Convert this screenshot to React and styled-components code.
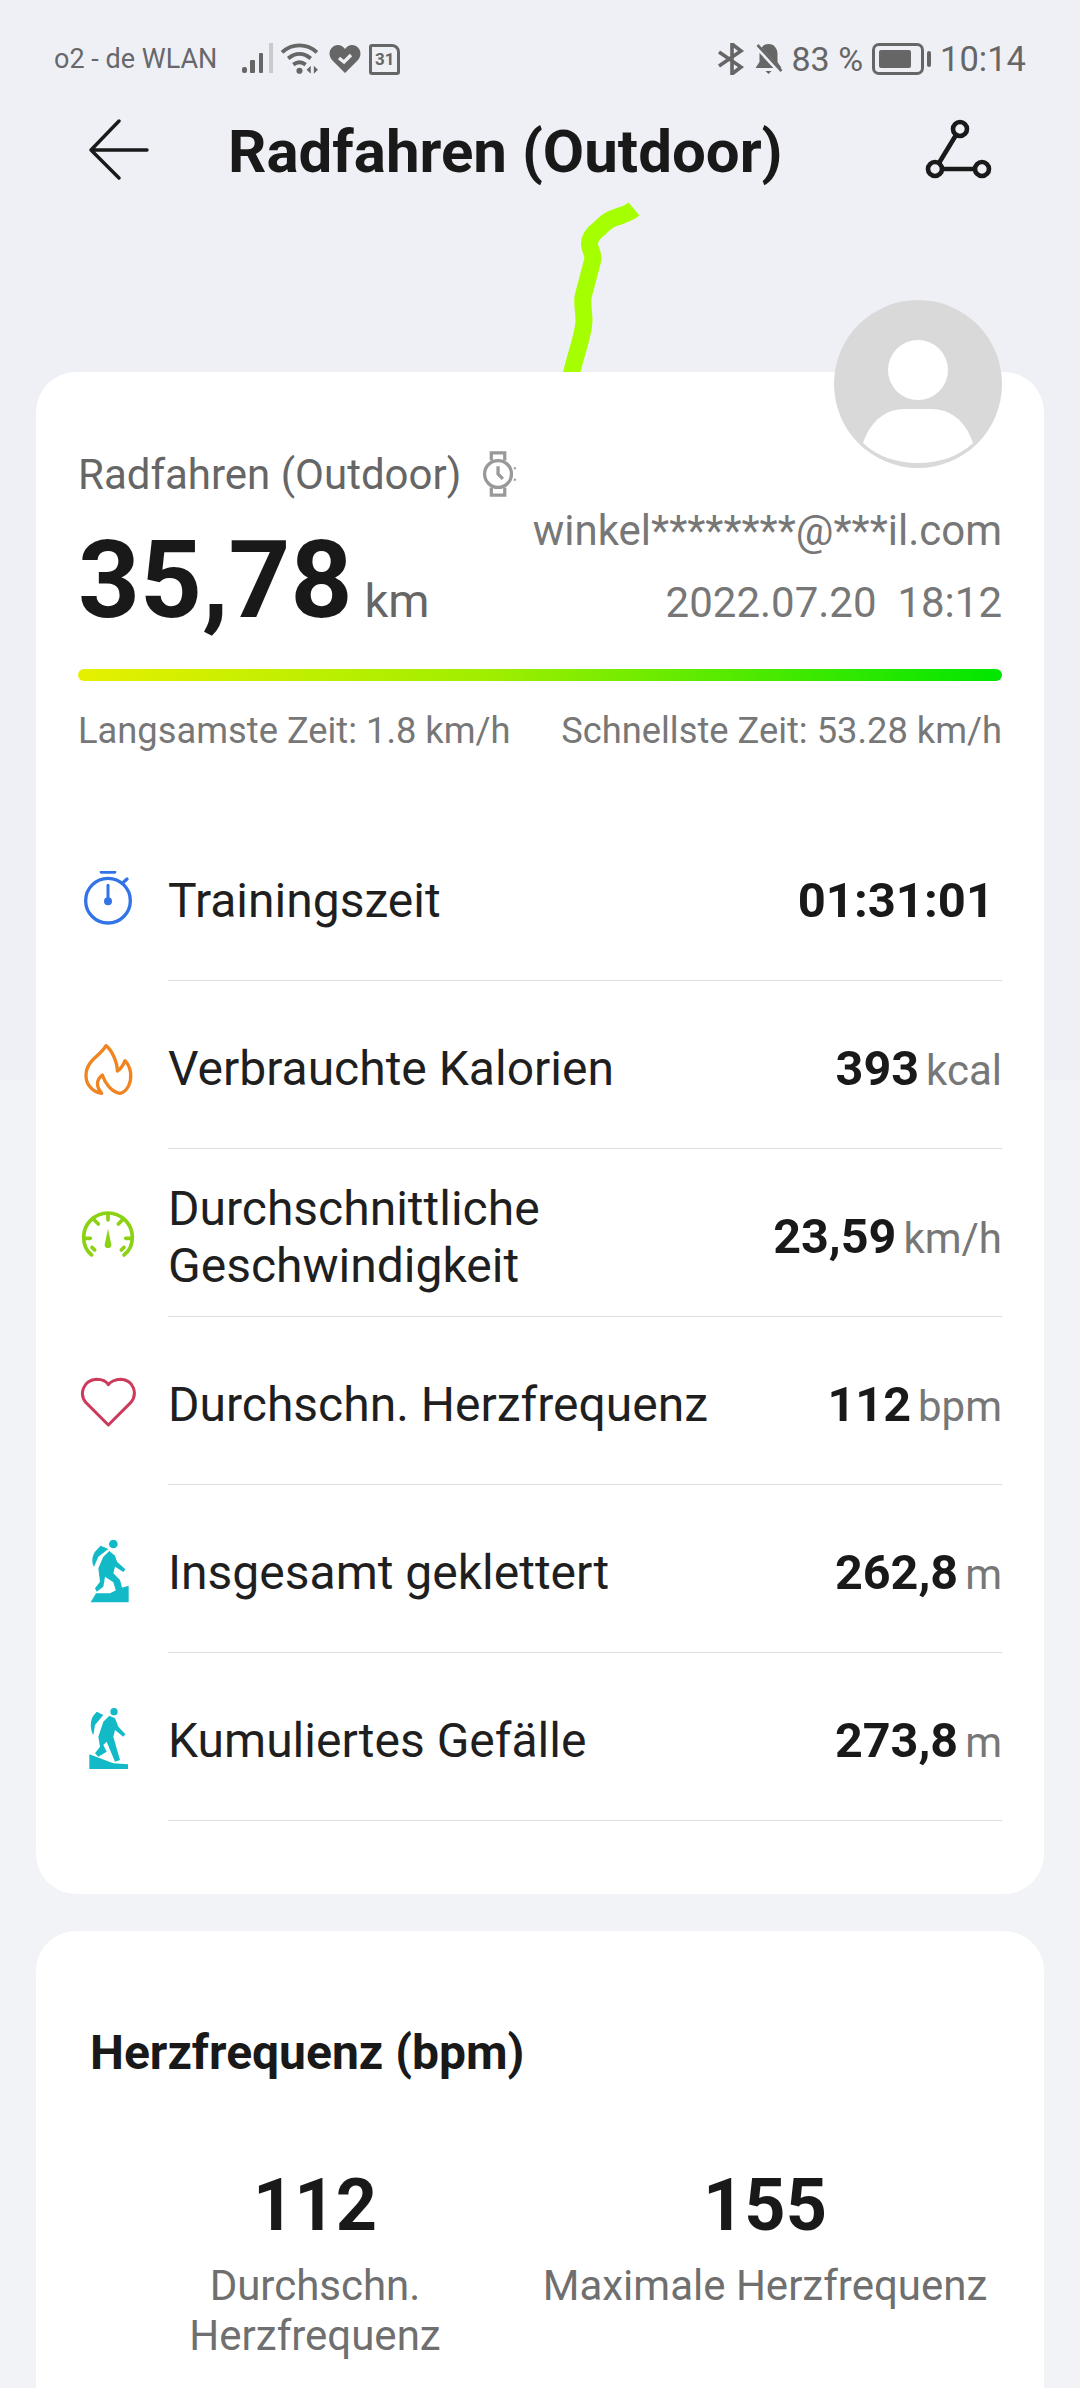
import React from "react";
import styled, { createGlobalStyle } from "styled-components";

const GlobalStyle = createGlobalStyle`
  html, body {
    margin: 0;
    padding: 0;
    background: #f2f3f7;
  }
  * {
    box-sizing: border-box;
  }
`;

const rows = [
  { icon: "timer", label: "Trainingszeit", value: "01:31:01", big: true },
  { icon: "flame", label: "Verbrauchte Kalorien", value: "393", unit: "kcal" },
  { icon: "gauge", label: "Durchschnittliche Geschwindigkeit", value: "23,59", unit: "km/h" },
  { icon: "heart", label: "Durchschn. Herzfrequenz", value: "112", unit: "bpm" },
  { icon: "climb", label: "Insgesamt geklettert", value: "262,8", unit: "m" },
  { icon: "descent", label: "Kumuliertes Gefälle", value: "273,8", unit: "m" },
];

const RowIcon = ({ name }) => {
  if (name === "timer") {
    return (
      <svg width="60" height="60" viewBox="54 63 180 180" fill="none" stroke="#3274e6" strokeWidth="10" strokeLinecap="round">
        <path d="M124 66h40" />
        <circle cx="144" cy="152" r="67" />
        <path d="M144 106v46" strokeWidth="9" />
        <circle cx="144" cy="154" r="7" fill="#3274e6" />
        <path d="M191 96l10-9" />
      </svg>
    );
  }
  if (name === "flame") {
    return (
      <svg width="60" height="60" viewBox="54 102 180 180" fill="none" stroke="#f08421" strokeWidth="10" strokeLinejoin="round">
        <path d="M138 122C120 155 78 165 78 212C78 240 100 262 125 265C108 245 108 225 127 210C135 235 155 262 180 265C205 258 214 230 212 205C210 190 203 175 195 167C190 180 182 192 172 198C172 170 155 135 138 122Z" />
      </svg>
    );
  }
  if (name === "gauge") {
    return (
      <svg width="60" height="60" viewBox="54 81 180 180" fill="none" stroke="#8ad212" strokeWidth="11" strokeLinecap="round" strokeLinejoin="round">
        <path d="M95 225C78 212 71 190 71 172A73 73 0 0 1 217 172C217 190 210 212 192 225" />
        <path d="M144 102v18M73 175h18M197 175h18M103 120l12 12M187 120l-12 12M104 210l-8-8M184 210l8-8" />
        <path d="M144 146l10 48a10 10 0 0 1-20 0z" fill="#8ad212" stroke="none" />
      </svg>
    );
  }
  if (name === "heart") {
    return (
      <svg width="60" height="60" viewBox="54 585 180 180" fill="none" stroke="#cc3a5c" strokeWidth="9" strokeLinejoin="round">
        <path d="M145 735L78 668C56 642 70 600 110 598C128 598 140 606 145 614C150 606 165 598 182 598C222 600 234 642 212 668Z" />
      </svg>
    );
  }
  if (name === "climb") {
    return (
      <svg width="60" height="60" viewBox="24 54 180 180" fill="#12b9c7" overflow="visible">
        <circle cx="130" cy="57" r="13" />
        <path d="M92 62L115 72L85 95L72 125C65 115 65 95 75 80Z" />
        <path d="M118 78L135 92L141 110L166 133L160 141L135 125L130 145L150 165L158 195L140 205L130 172L105 155L100 185L80 200L75 190L90 170L85 130L100 95Z" />
        <path d="M62 232L78 205L120 205L150 190L176 182L176 232Z" />
      </svg>
    );
  }
  return (
    <svg width="60" height="60" viewBox="24 48 180 180" fill="#12b9c7" overflow="visible">
      <circle cx="132" cy="50" r="11" />
      <path d="M80 50L100 60L75 90L70 120C60 105 60 75 70 62Z" />
      <path d="M118 62L135 70L145 95L166 118L160 125L135 105L130 125L150 195L135 200L110 140L100 150L110 170L85 185L75 175L90 155L85 125L100 80Z" />
      <path d="M58 178L130 205L174 208L174 222L58 222Z" />
    </svg>
  );
};

const App = () => {
  return (
    <Screen>
      <GlobalStyle />
      <StatusBar>
        <StatusGroup>
          <Carrier>o2 - de WLAN</Carrier>
          <StatusIcons>
            <svg width="34" height="32" viewBox="0 0 34 32" fill="#666">
              <rect x="1" y="24" width="5" height="6" rx="2" />
              <rect x="9" y="17" width="5" height="13" rx="1" />
              <rect x="18" y="10" width="4" height="20" rx="1" />
              <rect x="28" y="0" width="4" height="30" fill="#c9cace" />
            </svg>
            <WifiIcon width="41" height="33" viewBox="0 0 40 32" fill="none" stroke="#666" strokeWidth="3.8">
              <path d="M2 9c10-9 24-9 34 0M8 15c7-6 15-6 22 0M13 21c4-3 8-3 12 0" />
              <circle cx="19" cy="27" r="3" fill="#666" stroke="none" />
              <path d="M30 22v8l-4-4zM33 22v8l4-4z" fill="#666" stroke="none" />
            </WifiIcon>
            <svg width="32" height="30" viewBox="0 0 32 30">
              <path d="M16 29L3 16C-1 11 0 5 5 2c4-2 8-1 11 3 3-4 7-5 11-3 5 3 6 9 2 14z" fill="#666" />
              <path d="M10 14l5 4 7-7" fill="none" stroke="#eff0f5" strokeWidth="3.4" />
            </svg>
            <CalendarBox>31</CalendarBox>
          </StatusIcons>
        </StatusGroup>
        <StatusGroup $wide>
          <svg width="27" height="32" viewBox="0 0 27 32" fill="none" stroke="#666" strokeWidth="3.6">
            <path d="M1 9l22 15-9 7V1l9 7L1 23" />
          </svg>
          <svg width="29" height="32" viewBox="0 0 28 32">
            <path d="M14 1c6 0 9 5 9 10v8l4 6H1l4-6v-8c0-5 3-10 9-10z" fill="#666" />
            <path d="M11 28h6l-3 3z" fill="#666" />
            <path d="M2 3l24 26" stroke="#eff0f5" strokeWidth="5" />
            <path d="M3 2l24 26" stroke="#666" strokeWidth="2.6" />
          </svg>
          <BatteryText>83 %</BatteryText>
          <Battery>
            <BatteryFill />
          </Battery>
          <BatteryCap />
          <Clock>10:14</Clock>
        </StatusGroup>
      </StatusBar>

      <Header>
        <IconButton>
          <svg width="60" height="62" viewBox="0 0 60 62" fill="none" stroke="#1a1a1a" strokeWidth="3.4" strokeLinecap="round" strokeLinejoin="round">
            <path d="M30 2L2 31l28 28M2 31h56" />
          </svg>
        </IconButton>
        <Title>Radfahren (Outdoor)</Title>
        <IconButton>
          <svg width="68" height="62" viewBox="0 0 66 62" fill="none" stroke="#1a1a1a" strokeWidth="4.6">
            <circle cx="34" cy="10" r="7" />
            <circle cx="9" cy="50" r="7" />
            <circle cx="56" cy="50" r="7" />
            <path d="M30 16L13 44M16 50h33" />
          </svg>
        </IconButton>
      </Header>

      <MapArea>
        <svg width="90" height="187" viewBox="560 185 90 187" fill="none" stroke="#a6ff00" strokeWidth="17" strokeLinejoin="round">
          <path d="M634 209C628 214 622 215 617 217C608 219 604 224 600 228C592 234 588 240 590 247C591 251 593 254 593 259L583 297C582 305 584 312 584 320C584 335 575 355 570 380" />
        </svg>
      </MapArea>

      <Card>
        <Avatar>
          <svg width="168" height="168" viewBox="0 0 168 168">
            <circle cx="84" cy="84" r="84" fill="#d9d9d9" />
            <circle cx="84" cy="70" r="30" fill="#fff" />
            <path d="M29 143c8-23 23-34 42-34h26c19 0 34 11 42 34-15 14-34 20-55 20s-40-6-55-20z" fill="#fff" />
          </svg>
        </Avatar>
        <SummaryTop>
          <div>
            <SportLine>
              Radfahren (Outdoor)
              <svg width="36" height="48" viewBox="0 0 36 50" fill="none" stroke="#999" strokeWidth="3.4">
                <circle cx="17" cy="25" r="14" />
                <path d="M10 11V3h14v8M10 39v8h14v-8M17 17v8l5 5" />
                <path d="M34 18l1 2M34 32l1-2" strokeWidth="2" />
              </svg>
            </SportLine>
            <Distance>
              <strong>35,78</strong>
              <span>km</span>
            </Distance>
          </div>
          <Owner>
            <OwnerLine>winkel********@***il.com</OwnerLine>
            <OwnerLine>2022.07.20&nbsp;&nbsp;18:12</OwnerLine>
          </Owner>
        </SummaryTop>
        <SpeedBar />
        <SpeedRange>
          <span>Langsamste Zeit: 1.8 km/h</span>
          <span>Schnellste Zeit: 53.28 km/h</span>
        </SpeedRange>

        <Stats>
          {rows.map((row) => (
            <StatRow key={row.label}>
              <IconCell>
                <RowIcon name={row.icon} />
              </IconCell>
              <StatBody>
                <StatLabel>{row.label}</StatLabel>
                <StatValue>
                  <ValueNumber $big={row.big}>{row.value}</ValueNumber>
                  {row.unit && <ValueUnit>{row.unit}</ValueUnit>}
                </StatValue>
              </StatBody>
            </StatRow>
          ))}
        </Stats>
      </Card>

      <HeartCard>
        <HeartTitle>Herzfrequenz (bpm)</HeartTitle>
        <HeartGrid>
          <HeartCell>
            <HeartNumber>112</HeartNumber>
            <HeartCaption $narrow>Durchschn. Herzfrequenz</HeartCaption>
          </HeartCell>
          <HeartCell>
            <HeartNumber>155</HeartNumber>
            <HeartCaption>Maximale Herzfrequenz</HeartCaption>
          </HeartCell>
        </HeartGrid>
      </HeartCard>
    </Screen>
  );
};

export default App;

const Screen = styled.div`
  width: 1080px;
  height: 2388px;
  overflow: hidden;
  background: linear-gradient(#eff0f5 1080px, #f2f3f7 1080px);
  font-family: Roboto, "Noto Sans", sans-serif;
  color: #191919;
`;

const StatusBar = styled.div`
  height: 115px;
  padding: 41px 54px 0 54px;
  display: flex;
  justify-content: space-between;
  align-items: flex-start;
`;

const StatusGroup = styled.div`
  display: flex;
  align-items: center;
  gap: ${(p) => (p.$wide ? "9px" : "8px")};
  height: 36px;
  color: #666;
`;

const Carrier = styled.span`
  font-size: 27px;
  margin-right: 16px;
  color: #66686c;
`;

const StatusIcons = styled.div`
  display: flex;
  align-items: center;
  gap: 8px;
`;

const WifiIcon = styled.svg`
  margin-left: -3px;
`;

const CalendarBox = styled.div`
  width: 31px;
  height: 31px;
  border: 3px solid #666;
  border-radius: 3px 8px 3px 3px;
  font-size: 17px;
  font-weight: 700;
  line-height: 25px;
  text-align: center;
  color: #666;
`;

const BatteryText = styled.span`
  font-size: 34px;
`;

const Battery = styled.div`
  width: 52px;
  height: 32px;
  padding: 4px;
  border: 3px solid #666;
  border-radius: 7px;
`;

const BatteryFill = styled.div`
  width: 83%;
  height: 100%;
  background: #666;
  border-radius: 2px;
`;

const BatteryCap = styled.div`
  width: 4px;
  height: 16px;
  margin-left: -6px;
  background: #666;
  border-radius: 2px;
`;

const Clock = styled.span`
  font-size: 34.5px;
`;

const Header = styled.div`
  display: flex;
  align-items: center;
  justify-content: space-between;
  height: 70px;
  padding: 0 87px 0 89px;
`;

const IconButton = styled.div`
  display: flex;
  align-items: center;
  justify-content: center;
`;

const Title = styled.h1`
  margin: 0;
  flex: 1;
  padding: 3px 0 0 79px;
  font-size: 60px;
  font-weight: 700;
  color: #191919;
  white-space: nowrap;
`;

const MapArea = styled.div`
  height: 187px;
  padding-left: 560px;
  display: flex;
  overflow: hidden;
`;

const Card = styled.section`
  position: relative;
  margin: 0 36px;
  padding: 0 42px 72px;
  height: 1522px;
  background: #fff;
  border-radius: 40px;
`;

const Avatar = styled.div`
  position: absolute;
  top: -72px;
  right: 42px;
  width: 168px;
  height: 168px;
`;

const SummaryTop = styled.div`
  display: flex;
  justify-content: space-between;
  padding-top: 74px;
`;

const SportLine = styled.div`
  display: flex;
  align-items: center;
  gap: 20px;
  height: 56px;
  font-size: 42px;
  color: #666;
  white-space: nowrap;
`;

const Distance = styled.div`
  display: flex;
  align-items: baseline;
  gap: 12px;
  margin-top: 25px;

  strong {
    font-size: 108px;
    line-height: 106px;
    font-weight: 700;
  }

  span {
    font-size: 47px;
    color: #666;
  }
`;

const Owner = styled.div`
  text-align: right;
  padding-top: 49px;
`;

const OwnerLine = styled.div`
  font-size: 42px;
  line-height: 72px;
  color: #777;
  white-space: nowrap;
`;

const SpeedBar = styled.div`
  height: 12px;
  margin-top: 30px;
  border-radius: 6px;
  background: linear-gradient(90deg, #e6f000, #9fee00 45%, #00e600);
`;

const SpeedRange = styled.div`
  display: flex;
  justify-content: space-between;
  margin-top: 28px;
  font-size: 36.3px;
  line-height: 44px;
  color: #777;
  white-space: nowrap;
`;

const Stats = styled.div`
  margin-top: 60px;
`;

const StatRow = styled.div`
  display: flex;
  align-items: stretch;
  height: 168px;
`;

const IconCell = styled.div`
  width: 90px;
  display: flex;
  align-items: center;
  padding-top: 8px;
`;

const StatBody = styled.div`
  flex: 1;
  display: flex;
  align-items: center;
  justify-content: space-between;
  padding-top: 8px;
  border-bottom: 1px solid #dedede;
`;

const StatLabel = styled.div`
  max-width: 560px;
  font-size: 48px;
  line-height: 57px;
  color: #1f1f1f;
`;

const StatValue = styled.div`
  display: flex;
  align-items: baseline;
  gap: 7px;
  white-space: nowrap;
`;

const ValueNumber = styled.span`
  font-size: ${(p) => (p.$big ? "49px" : "48.5px")};
  font-weight: 700;
  padding-right: ${(p) => (p.$big ? "8px" : "0")};
`;

const ValueUnit = styled.span`
  font-size: 42px;
  color: #777;
`;

const HeartCard = styled.section`
  margin: 37px 36px 0;
  padding: 92px 54px 0;
  height: 600px;
  background: #fff;
  border-radius: 40px;
`;

const HeartTitle = styled.h2`
  margin: 0;
  font-size: 48px;
  line-height: 60px;
  font-weight: 700;
`;

const HeartGrid = styled.div`
  display: grid;
  grid-template-columns: 1fr 1fr;
  margin-top: 82px;
`;

const HeartCell = styled.div`
  display: flex;
  flex-direction: column;
  align-items: center;
  text-align: center;
`;

const HeartNumber = styled.div`
  font-size: 72px;
  line-height: 82px;
  font-weight: 700;
`;

const HeartCaption = styled.div`
  max-width: ${(p) => (p.$narrow ? "300px" : "none")};
  margin-top: 14px;
  font-size: 42px;
  line-height: 50px;
  color: #6f6f6f;
`;
